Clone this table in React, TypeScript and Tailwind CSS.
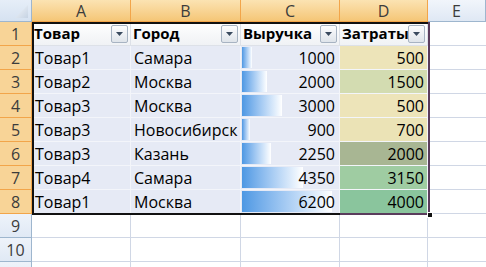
import React from "react";

const rows = [
  ["Товар1", "Самара", 1000, 500, "#ede4b9"],
  ["Товар2", "Москва", 2000, 1500, "#d3dcb1"],
  ["Товар3", "Москва", 3000, 500, "#ede4b9"],
  ["Товар3", "Новосибирск", 900, 700, "#ebe3b6"],
  ["Товар3", "Казань", 2250, 2000, "#a8b693"],
  ["Товар4", "Самара", 4350, 3150, "#9fcca2"],
  ["Товар1", "Москва", 6200, 4000, "#8ac59d"],
] as const;

const font = { fontFamily: '"Open Sans", "Liberation Sans", sans-serif' };

function Drop() {
  return (
    <div className="absolute z-10 right-[2px] top-[3px] w-[17px] h-[18px] border border-[#a7b3c2] rounded-[2px] bg-gradient-to-b from-[#fdfdfe] to-[#dfe4ea] flex items-center justify-center">
      <svg width="7" height="4" viewBox="0 0 7 4">
        <path d="M0 0 H7 L3.5 4 Z" fill="#3a4a5e" />
      </svg>
    </div>
  );
}

const colHdr =
  "h-[22px] border-r border-b flex items-center justify-center text-[16px] text-[#3c3c3c]";

export default function App() {
  const barW = (v: number) => 8 + ((v - 900) / (6200 - 900)) * 82;
  return (
    <div className="relative w-[486px] h-[267px] overflow-hidden bg-white" style={font}>
      <div className="grid grid-cols-[32px_99px_110px_99px_88px_1fr]">
        {/* corner */}
        <div className="h-[22px] border-r border-b border-[#9eb6ce] bg-gradient-to-b from-[#e6eef8] to-[#d6e2f1] relative">
          <svg className="absolute right-[3px] bottom-[3px]" width="13" height="13" viewBox="0 0 13 13">
            <defs>
              <linearGradient id="tg" x1="0" y1="0" x2="1" y2="1">
                <stop offset="0" stopColor="#f4f7fb" />
                <stop offset="1" stopColor="#c6d3e3" />
              </linearGradient>
            </defs>
            <path d="M13 0 V13 H0 Z" fill="url(#tg)" />
          </svg>
        </div>
        {["A", "B", "C", "D"].map((c) => (
          <div
            key={c}
            className={`${colHdr} border-[#f2a54a] bg-gradient-to-b from-[#fbe3b2] to-[#f5c676]`}
          >
            {c}
          </div>
        ))}
        <div className={`${colHdr} border-[#9eb6ce] bg-gradient-to-b from-[#f1f5fb] to-[#dfe8f4]`}>E</div>

        {/* row 1 - table header */}
        <div className="h-[24px] border-r border-b border-[#f2a54a] bg-[#f8d497] flex items-center justify-center text-[16px] text-[#3c3c3c]">
          1
        </div>
        {["Товар", "Город", "Выручка", "Затраты"].map((t) => (
          <div
            key={t}
            className="relative h-[24px] border-b border-r border-[#dde1e8] bg-gradient-to-b from-[#ffffff] to-[#f0f2f5] flex items-center pl-[2px] text-[15px] font-bold text-black whitespace-nowrap overflow-hidden"
          >
            {t}
            <Drop />
          </div>
        ))}
        <div className="h-[24px] border-b border-[#d0d7e5]" />

        {rows.map((r, i) => (
          <React.Fragment key={i}>
            <div className="h-[24px] border-r border-b border-[#f2a54a] bg-[#f8d497] flex items-center justify-center text-[16px] text-[#3c3c3c]">
              {i + 2}
            </div>
            <div className="h-[24px] border-r border-b border-[#f3f5fa] bg-[#e6eaf5] flex items-center pl-[3px] text-[16px] text-black">
              {r[0]}
            </div>
            <div className="h-[24px] border-r border-b border-[#f3f5fa] bg-[#e6eaf5] flex items-center pl-[3px] text-[16px] text-black whitespace-nowrap">
              {r[1]}
            </div>
            <div className="relative h-[24px] border-r border-b border-[#f3f5fa] bg-[#e6eaf5] flex items-center justify-end pr-[4px] text-[16px] text-black">
              <div
                className="absolute left-[1px] top-[1px] bottom-[1px] bg-gradient-to-r from-[#4d98e3] to-[#ffffff]"
                style={{ width: `${barW(r[2] as number)}px` }}
              />
              <span className="relative">{r[2]}</span>
            </div>
            <div
              className="h-[24px] border-r border-b border-[#f3f5fa] flex items-center justify-end pr-[3px] text-[16px] text-black"
              style={{ backgroundColor: r[4] as string }}
            >
              {r[3]}
            </div>
            <div className="h-[24px] border-b border-[#d0d7e5]" />
          </React.Fragment>
        ))}

        {[9, 10, 0].map((n) => (
          <React.Fragment key={n}>
            <div className="h-[24px] border-r border-b border-[#9eb6ce] bg-gradient-to-b from-[#eef3fa] to-[#e0e9f5] flex items-center justify-center text-[16px] text-[#3c3c3c]">
              {n > 0 ? n : ""}
            </div>
            <div className="h-[24px] border-r border-b border-[#d0d7e5]" />
            <div className="h-[24px] border-r border-b border-[#d0d7e5]" />
            <div className="h-[24px] border-r border-b border-[#d0d7e5]" />
            <div className="h-[24px] border-r border-b border-[#d0d7e5]" />
            <div className="h-[24px] border-b border-[#d0d7e5]" />
          </React.Fragment>
        ))}
      </div>

      {/* selection border */}
      <div className="absolute left-[32px] top-[22px] w-[398px] h-[193px] border-2 border-[#111]" />
      <div className="absolute left-[340px] top-[22px] w-[90px] h-[193px] border-r-2 border-b-2 border-[#5a3c5c]" />
      <div className="absolute left-[427px] top-[212px] w-[6px] h-[6px] bg-[#111] border border-white" />
    </div>
  );
}
